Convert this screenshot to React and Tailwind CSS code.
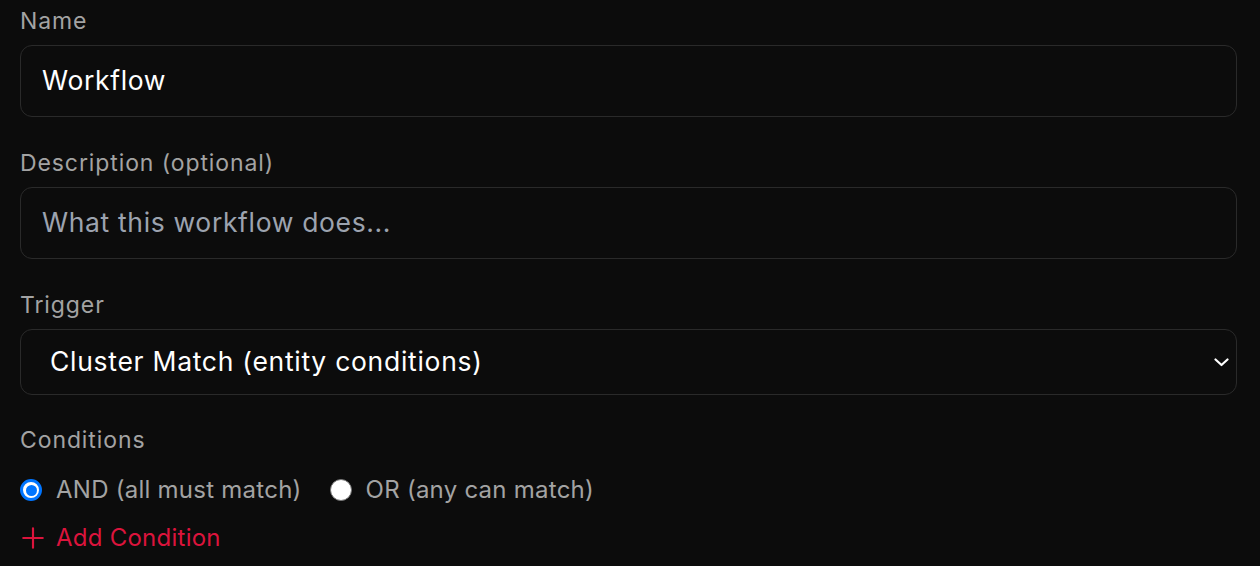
import { useState } from 'react'

function Radio({ checked }) {
  if (checked) {
    return (
      <span className="flex h-[22px] w-[22px] items-center justify-center rounded-full border-[3px] border-[#0075ff] bg-white">
        <span className="h-[11px] w-[11px] rounded-full bg-[#0075ff]" />
      </span>
    )
  }
  return <span className="h-[22px] w-[22px] rounded-full border border-[#767676] bg-white" />
}

export default function App() {
  const [mode, setMode] = useState('and')

  return (
    <div className="min-h-screen bg-[#0c0c0c] pl-5 pr-[23px] pt-[6px] font-['Inter',sans-serif]">
      <div className="flex flex-col">
        <label className="text-[23px] leading-[30px] tracking-[0.9px] text-[#a3a3a3]">Name</label>
        <div className="mt-[9px] flex h-[72px] items-center rounded-[12px] border border-[#2a2a2a] px-[21px] text-[26.5px] tracking-[0.65px] text-white">
          Workflow
        </div>

        <label className="mt-[31px] text-[23px] leading-[30px] tracking-[0.9px] text-[#a3a3a3]">Description (optional)</label>
        <div className="mt-[9px] flex h-[72px] items-center rounded-[12px] border border-[#2a2a2a] px-[21px] text-[26.5px] tracking-[0.65px] text-[#9ca3af]">
          What this workflow does...
        </div>

        <label className="mt-[31px] text-[23px] leading-[30px] tracking-[0.9px] text-[#a3a3a3]">Trigger</label>
        <div className="mt-[9px] flex h-[66px] items-center justify-between rounded-[12px] border border-[#2a2a2a] pl-[29px] pr-[7px] text-[26.5px] tracking-[0.72px] text-white">
          <span>Cluster Match (entity conditions)</span>
          <svg width="15" height="9" viewBox="0 0 15 9" fill="none" stroke="white" strokeWidth="2.2" strokeLinecap="round" strokeLinejoin="round">
            <path d="M1.5 1.5l6 5.5 6-5.5" />
          </svg>
        </div>

        <label className="mt-[30px] text-[23px] leading-[30px] tracking-[0.9px] text-[#a3a3a3]">Conditions</label>

        <div className="mt-[20px] flex h-[30px] items-center gap-[28px] text-[24px] tracking-[0.25px] text-[#a3a3a3]">
          <button onClick={() => setMode('and')} className="flex items-center gap-[14px]">
            <Radio checked={mode === 'and'} />
            AND (all must match)
          </button>
          <button onClick={() => setMode('or')} className="flex items-center gap-[14px]">
            <Radio checked={mode === 'or'} />
            OR (any can match)
          </button>
        </div>

        <button className="mt-[18px] flex h-[30px] items-center gap-[10px] text-[24px] tracking-[0.25px] text-[#dc143c]">
          <svg width="26" height="26" viewBox="0 0 24 24" fill="none" stroke="currentColor" strokeWidth="2" strokeLinecap="round">
            <path d="M12 3v18M3 12h18" />
          </svg>
          Add Condition
        </button>
      </div>
    </div>
  )
}
